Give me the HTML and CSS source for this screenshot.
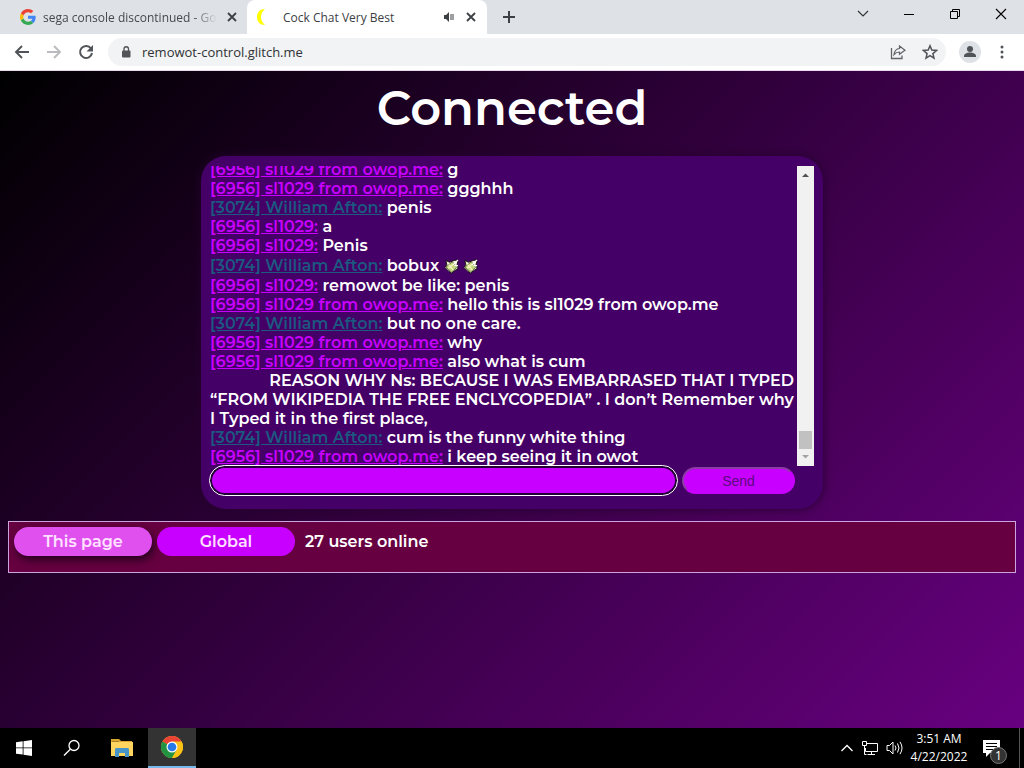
FILE: index.html
```html
<!DOCTYPE html>
<html lang="en">
<head>
<meta charset="utf-8">
<title>Cock Chat Very Best</title>
<link rel="stylesheet" href="styles.css">
</head>
<body>
<div class="desktop">
  <header class="tabstrip">
    <div class="tab">
      <svg class="favicon" width="16" height="16" viewBox="0 0 48 48"><path fill="#ea4335" d="M24 9.500c3.500 0 6.700 1.200 9.200 3.600l6.900-6.900C35.900 2.400 30.500 0 24 0 14.600 0 6.500 5.400 2.600 13.200l8 6.200C12.400 13.700 17.700 9.500 24 9.500z"/><path fill="#4285f4" d="M47 24.500c0-1.600-.2-3.100-.4-4.500H24v9h12.900c-.6 3-2.200 5.500-4.700 7.200l7.700 6C44.400 38 47 31.800 47 24.500z"/><path fill="#fbbc05" d="M10.500 28.600a14.500 14.500 0 0 1 0-9.200l-8-6.200a24 24 0 0 0 0 21.600z"/><path fill="#34a853" d="M24 48c6.500 0 11.900-2.100 15.900-5.800l-7.700-6c-2.200 1.400-4.900 2.300-8.200 2.300-6.300 0-11.600-4.200-13.500-9.900l-8 6.200C6.500 42.600 14.600 48 24 48z"/></svg>
      <span class="tab-title faded">sega console discontinued - Goo</span>
      <button class="icon-btn" aria-label="Close tab"><svg width="10" height="10" viewBox="0 0 10 10"><path d="M1 1l8 8M9 1L1 9" stroke="#3c4043" stroke-width="1.800"/></svg></button>
    </div>
    <div class="tab active">
      <svg class="favicon" width="16" height="16" viewBox="0 0 16 16"><path d="M10 0C5 0 2 3.500 2 8s3 8 8 8C7 13 6 11 6 8s1-5 4-8z" fill="#ff0"/></svg>
      <span class="tab-title">Cock Chat Very Best</span>
      <svg class="audio" width="12" height="12" viewBox="0 0 12 12"><path d="M1 4h2l3-3v10L3 8H1z" fill="#3c4043"/><path d="M8 3v6M10 3v6" stroke="#3c4043" fill="none"/></svg>
      <button class="icon-btn" aria-label="Close tab"><svg width="10" height="10" viewBox="0 0 10 10"><path d="M1 1l8 8M9 1L1 9" stroke="#3c4043" stroke-width="1.800"/></svg></button>
    </div>
    <button class="icon-btn new-tab" aria-label="New tab"><svg width="12" height="12" viewBox="0 0 12 12"><path d="M6 0v12M0 6h12" stroke="#3c4043" stroke-width="2"/></svg></button>
    <div class="window-controls">
      <button class="icon-btn" aria-label="Search tabs"><svg width="12" height="12" viewBox="0 0 12 12"><path d="M1 3l5 5 5-5" fill="none" stroke="#333" stroke-width="1.200"/></svg></button>
      <button class="icon-btn" aria-label="Minimize"><svg width="12" height="12" viewBox="0 0 12 12"><path d="M1 6.500h10" stroke="#000"/></svg></button>
      <button class="icon-btn" aria-label="Restore"><svg width="12" height="12" viewBox="0 0 12 12"><path d="M1.500 3.500h7v7h-7zM3.500 3.500v-2h7v7h-2" fill="none" stroke="#000"/></svg></button>
      <button class="icon-btn" aria-label="Close"><svg width="12" height="12" viewBox="0 0 12 12"><path d="M1 1l10 10M11 1L1 11" stroke="#000" stroke-width="1.100"/></svg></button>
    </div>
  </header>
  <nav class="toolbar">
    <button class="icon-btn" aria-label="Back"><svg width="16" height="16" viewBox="0 0 16 16"><path d="M15 8H2M8 2L2 8l6 6" fill="none" stroke="#505357" stroke-width="1.900"/></svg></button>
    <button class="icon-btn" aria-label="Forward"><svg width="16" height="16" viewBox="0 0 16 16"><path d="M1 8h13M8 2l6 6-6 6" fill="none" stroke="#b9bbbe" stroke-width="1.900"/></svg></button>
    <button class="icon-btn" aria-label="Reload"><svg width="16" height="16" viewBox="0 0 16 16"><path d="M13 4.500A6 6 0 1 0 14 9" fill="none" stroke="#505357" stroke-width="2"/><path d="M15 1v6.500H8.500z" fill="#505357"/></svg></button>
    <div class="omnibox">
      <svg width="10" height="12" viewBox="0 0 10 12"><rect x="1" y="4.500" width="8.500" height="7" rx="1" fill="#505357"/><path d="M3 5V3a2.250 2.250 0 0 1 4.500 0v2" fill="none" stroke="#505357" stroke-width="1.300"/></svg>
      <input class="url" aria-label="Address" value="remowot-control.glitch.me">
      <button class="icon-btn" aria-label="Share"><svg width="16" height="16" viewBox="0 0 16 16"><path d="M1.500 4v10.500h10.500v-3" fill="none" stroke="#5f6368" stroke-width="1.300"/><path d="M4 10.500C4.500 7 6.500 4.800 9.500 4.500V2L15 6.300l-5.500 4V8C7 8 5.500 8.800 4 10.500z" fill="none" stroke="#5f6368" stroke-width="1.200"/></svg></button>
      <button class="icon-btn" aria-label="Bookmark"><svg width="16" height="16" viewBox="0 0 16 16"><path d="M8 1.800l1.800 4.300 4.700.4-3.600 3.100 1.100 4.600L8 11.700l-4 2.500 1.100-4.600L1.500 6.500l4.700-.4z" fill="none" stroke="#505357" stroke-width="1.500"/></svg></button>
    </div>
    <button class="icon-btn profile" aria-label="Profile"><svg width="22" height="22" viewBox="0 0 22 22"><circle cx="11" cy="11" r="11" fill="#dee1e6"/><circle cx="11" cy="8" r="3" fill="#505357"/><path d="M5 16v-1c0-2 3-3.500 6-3.500s6 1.500 6 3.500v1z" fill="#505357"/></svg></button>
    <button class="icon-btn" aria-label="Menu"><svg width="16" height="16" viewBox="0 0 16 16" fill="#505357"><circle cx="8" cy="3" r="1.500"/><circle cx="8" cy="8" r="1.500"/><circle cx="8" cy="13" r="1.500"/></svg></button>
  </nav>
  <main class="page">
    <h1 class="status">Connected</h1>
    <section class="chat">
      <div class="log">
        <div class="messages">
          <p><a href="#" class="user">[6956] sl1029 from owop.me:</a> g</p>
          <p><a href="#" class="user">[6956] sl1029 from owop.me:</a> ggghhh</p>
          <p><a href="#" class="user teal">[3074] William Afton:</a> penis</p>
          <p><a href="#" class="user">[6956] sl1029:</a> a</p>
          <p><a href="#" class="user">[6956] sl1029:</a> Penis</p>
          <p class="with-emoji"><a href="#" class="user teal">[3074] William Afton:</a> bobux <svg class="emoji" viewBox="0 0 16 16"><use href="#money"/></svg> <svg class="emoji" viewBox="0 0 16 16"><use href="#money"/></svg></p>
          <p><a href="#" class="user">[6956] sl1029:</a> remowot be like: penis</p>
          <p><a href="#" class="user">[6956] sl1029 from owop.me:</a> hello this is sl1029 from owop.me</p>
          <p><a href="#" class="user teal">[3074] William Afton:</a> but no one care.</p>
          <p><a href="#" class="user">[6956] sl1029 from owop.me:</a> why</p>
          <p><a href="#" class="user">[6956] sl1029 from owop.me:</a> also what is cum</p>
          <p class="reason">REASON WHY Ns: BECAUSE I WAS EMBARRASED THAT I TYPED</p>
          <p>“FROM WIKIPEDIA THE FREE ENCLYCOPEDIA” . I don’t Remember why</p>
          <p>I Typed it in the first place,</p>
          <p><a href="#" class="user teal">[3074] William Afton:</a> cum is the funny white thing</p>
          <p><a href="#" class="user">[6956] sl1029 from owop.me:</a> i keep seeing it in owot</p>
        </div>
        <div class="scrollbar">
          <svg width="17" height="17" viewBox="0 0 17 17"><path d="M5 11h7L8.500 7.500z" fill="#505050"/></svg>
          <div class="track"><div class="thumb"></div></div>
          <svg width="17" height="17" viewBox="0 0 17 17"><path d="M5 6h7l-3.500 3.500z" fill="#a3a3a3"/></svg>
        </div>
      </div>
      <form class="composer">
        <input class="message" aria-label="Message">
        <button class="send" type="button">Send</button>
      </form>
    </section>
    <section class="rooms">
      <button class="room selected">This page</button>
      <button class="room">Global</button>
      <span>27 users online</span>
    </section>
  </main>
  <footer class="taskbar">
    <button class="task" aria-label="Start"><svg width="16" height="16" viewBox="0 0 16 16" fill="#fff"><path d="M0 2.300L6.700 1.300v6.200H0zM7.500 1.200L16 0v7.500H7.500zM0 8.300h6.700v6.300L0 13.700zM7.500 8.300H16V16l-8.500-1.200z"/></svg></button>
    <button class="task" aria-label="Search"><svg width="18" height="18" viewBox="0 0 18 18"><circle cx="11" cy="6.500" r="5" fill="none" stroke="#fff" stroke-width="1.300"/><path d="M7.300 10.200L1 16.500" stroke="#fff" stroke-width="1.400"/></svg></button>
    <button class="task" aria-label="File Explorer"><svg width="22" height="20" viewBox="0 0 22 20"><path d="M0 1h8l2 2h11v3H0z" fill="#dca52e"/><path d="M0 4h22v14H0z" fill="#ffd45f"/><path d="M1 3h7v1H1z" fill="#a8832b"/><path d="M4 19v-7q0-2 1-2h12q1 0 1 2v7h-4v-4H8v4z" fill="#4795c8"/></svg></button>
    <button class="task open" aria-label="Google Chrome"><svg width="22" height="22" viewBox="0 0 48 48"><circle cx="24" cy="24" r="24" fill="#fbc116"/><path d="M24 24L3.200 12A24 24 0 0 1 44.800 12z" fill="#ea4335"/><path d="M3.200 12A24 24 0 0 0 24 48l10.400-18L24 24z" fill="#229342"/><path d="M24 12h20.800A24 24 0 0 1 24 48l10.400-18z" fill="#fbc116"/><circle cx="24" cy="24" r="12" fill="#fff"/><circle cx="24" cy="24" r="9.500" fill="#2879e8"/></svg></button>
    <div class="tray">
      <svg width="12" height="8" viewBox="0 0 12 8"><path d="M0.500 7L6 1.500 11.500 7" fill="none" stroke="#fff" stroke-width="1.300"/></svg>
      <svg width="17" height="16" viewBox="0 0 17 16"><path d="M6 3.500h10.500v8H4.500V8M10.500 12v2.500M6.500 14.500H14M1.500 1.500h4v4h-4zM3.500 6v8.500h2" fill="none" stroke="#fff"/></svg>
      <svg width="17" height="16" viewBox="0 0 17 16"><path d="M1 5.500h2.500L7 2v12l-3.500-3.500H1zM9 5.500q2 2.500 0 5M11.500 3.500q3 4.500 0 9M14 1.800q4 6.200 0 12.400" fill="none" stroke="#fff"/></svg>
      <div class="clock"><span>3:51 AM</span><span>4/22/2022</span></div>
      <div class="notice"><svg width="17" height="17" viewBox="0 0 17 17"><path d="M0 0h17v13H7l-4 4v-4H0z" fill="#fff"/><path d="M3 3.500h11M3 6.500h11M3 9.500h7" stroke="#000"/></svg><span class="badge">1</span></div>
      <div class="peek"></div>
    </div>
  </footer>
</div>
<svg class="defs"><symbol id="money" viewBox="0 0 16 16"><path d="M2 1.500l4 2 5-2 4-.5-1 5 1 4-3 2-4 3-3-2-4-4 2-3z" fill="#f6f0d5" stroke="#111" stroke-linejoin="round"/><path d="M2 8.500L9 3l4.500 6L8 14z" fill="#c3d67c" stroke="#4e592c" stroke-width=".8"/><path d="M5 6l5 6M4.500 10l6-5" stroke="#f4f0bd" stroke-width="1.400"/><path d="M10 6l5-5M11 7h4" stroke="#fff" stroke-width="1.300"/></symbol></svg>
</body>
</html>
```

FILE: styles.css
```css
* { box-sizing: border-box; }
body { margin: 0; font-family: "Open Sans", sans-serif; }
button { font: inherit; border: 0; padding: 0; }
svg { display: block; flex: none; }
.defs { position: absolute; width: 0; height: 0; }
.desktop { height: 100vh; display: flex; flex-direction: column; overflow: hidden; }

.tabstrip { height: 34px; flex: none; display: flex; align-items: stretch; background: #dee1e6; }
.icon-btn { display: flex; align-items: center; justify-content: center; background: none; width: 16px; height: 16px; flex: none; }
.tab { display: flex; align-items: center; width: 247px; padding: 0 7px 0 20px; gap: 7px; font-size: 12px; color: #45494d; }
.tab.active { width: 240px; padding: 0 8px; gap: 8px; background: #fff; color: #3c4043; border-radius: 8px 8px 0 0; }
.tab.active .favicon { margin-right: 4px; }
.tab-title { flex: 1; overflow: hidden; white-space: nowrap; }
.faded { mask-image: linear-gradient(90deg, #000 86%, transparent); }
.audio { margin-right: 0; }
.new-tab { align-self: center; margin-left: 14px; }
.window-controls { margin-left: auto; display: flex; gap: 30px; padding: 6px 15px 0 0; }

.toolbar { height: 37px; flex: none; display: flex; align-items: center; gap: 16px; padding: 0 14px; background: #fff; border-bottom: 1px solid #ead9ee; }
.omnibox { flex: 1; height: 28px; display: flex; align-items: center; gap: 16px; padding: 0 8px 0 13px; margin-left: -2px; border-radius: 14px; background: #f1f3f4; }
.url { flex: 1; min-width: 0; margin-left: -5px; padding: 0; border: 0; background: none; font: 13px "Open Sans", sans-serif; color: #303236; }
.profile { width: 22px; height: 22px; }
.toolbar > .profile { margin-left: -3px; margin-right: -3px; }

.page { flex: 1; min-height: 0; padding: 8px; font: 600 16px/19px Montserrat, Inter, sans-serif; color: #fff; background: linear-gradient(135deg, #000 0%, #680080 100%); }
.status { margin: 0 0 18px; text-align: center; font-size: 48px; line-height: 59px; font-weight: 600; }
.chat { width: 622px; max-width: 100%; margin: 0 auto; padding: 10px 9px 14px; border-radius: 25px; background: #440066; box-shadow: 0 0 10px #25002f; }
.log { display: flex; height: 300px; }
.messages { flex: 1; min-width: 0; display: flex; flex-direction: column; justify-content: flex-end; overflow: hidden; }
.messages p { margin: 0; flex: none; white-space: nowrap; }
.messages .with-emoji { line-height: 21px; }
.messages .reason { text-align: right; padding-right: 3px; }
.user { color: #c800ff; }
.user.teal { color: #1c5880; }
.emoji { display: inline-block; width: 15px; height: 15px; vertical-align: -3px; }
.scrollbar { width: 17px; display: flex; flex-direction: column; background: #f1f1f1; }
.track { flex: 1; display: flex; align-items: flex-end; justify-content: center; }
.thumb { width: 13px; height: 18px; background: #c1c1c1; }
.composer { display: flex; gap: 5px; align-items: center; padding-right: 19px; }
.message { flex: 1; min-width: 0; height: 29px; border: 2px solid #240038; border-radius: 15px; background: #c800ff; outline: 1px solid #fff; padding: 0 12px; color: #fff; }
.send { width: 113px; height: 27px; border: 2px solid #8d3ba5; border-right-color: #c800ff; border-bottom-color: #c800ff; border-radius: 14px; background: #c800ff; color: #5c0a80; font: 14px/22px "Liberation Sans", sans-serif; }
.rooms { display: flex; align-items: flex-start; gap: 5px; height: 52px; margin-top: 12px; padding: 5px; border: 1px solid #cda3df; background: #660040; line-height: 29px; }
.room { width: 138px; height: 29px; border-radius: 15px; background: #c800ff; color: #ffe2ff; }
.selected { background: #df50ef; box-shadow: 2px 4px 8px #25001e; }
.rooms span { margin-left: 5px; }

.taskbar { height: 40px; flex: none; display: flex; background: #000; color: #fff; }
.task { width: 48px; display: flex; align-items: center; justify-content: center; margin: 0; background: none; }
.task:nth-child(3) { width: 52px; }
.task.open { background: #333; border-bottom: 2px solid #76b9ed; }
.task:nth-child(3) + .task.open { margin-left: 0; }
.tray { margin-left: auto; display: flex; align-items: center; gap: 8px; }
.clock { width: 56px; display: flex; flex-direction: column; align-items: center; font-size: 12px; line-height: 18px; white-space: nowrap; }
.notice { position: relative; margin-left: 8px; margin-right: 11px; }
.badge { position: absolute; left: 7px; top: 7px; width: 17px; height: 17px; border: 1px solid #777; border-radius: 50%; background: #333; font-size: 12px; line-height: 15px; text-align: center; }
.peek { width: 5px; align-self: stretch; border-left: 1px solid #555; }
```
